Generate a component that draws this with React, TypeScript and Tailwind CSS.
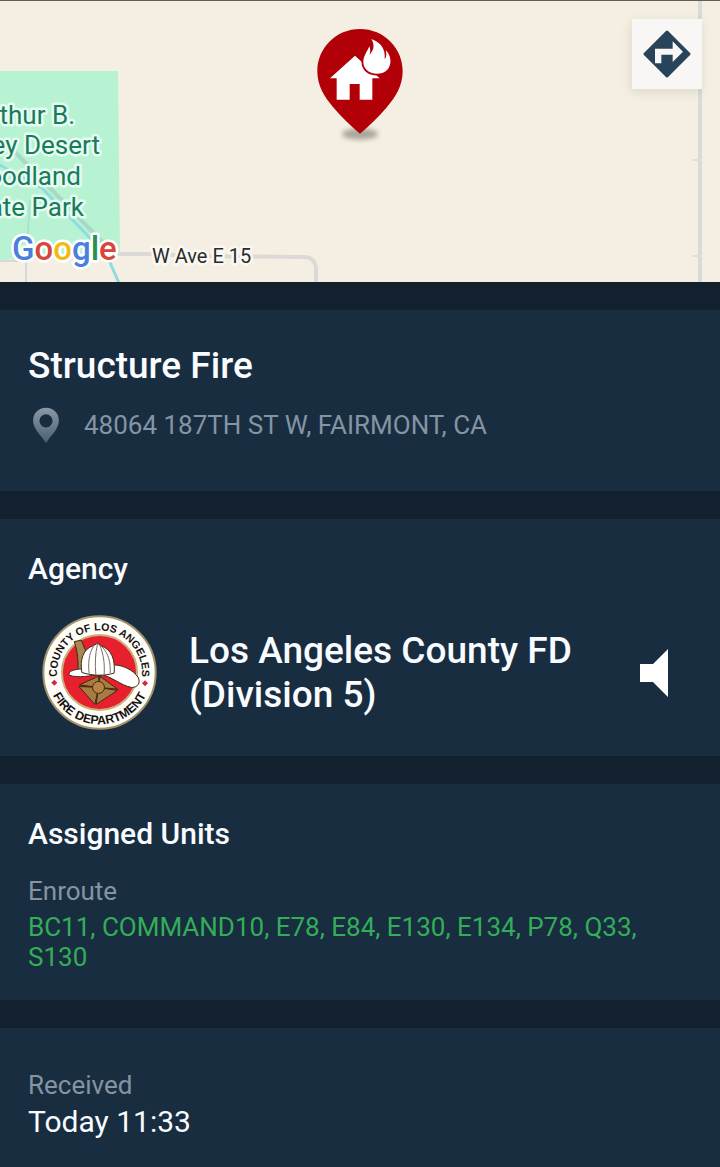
import React from "react";

const Divider: React.FC = () => <div className="h-7 bg-[#12212d]" />;

const Map: React.FC = () => (
  <svg
    viewBox="0 0 720 282"
    preserveAspectRatio="xMidYMid slice"
    className="block h-full w-full"
    fontFamily="Roboto, sans-serif"
    role="img"
    aria-label="Map"
  >
    <rect width="720" height="282" fill="#f5efe3" />
    <path d="M0 71H118L120 256L0 260Z" fill="#b7f3d3" />
    <g fill="none">
      <path d="M0 261H26V282" stroke="#d6d9dc" strokeWidth="2" />
      <path d="M30 200L26 261" stroke="#a9e2ca" strokeWidth="2" />
      <path d="M14 151L112 252" stroke="#a8d9c6" strokeWidth="4" />
      <path d="M-2 164L42 188L88 236L108 258L119 283" stroke="#8fdcdf" strokeWidth="3" />
      <path
        d="M114 254H150L200 256L305 257Q316 258 316 270V282"
        stroke="#dcdad6"
        strokeWidth="4"
      />
      <path d="M700 0V282" stroke="#d9dbd6" strokeWidth="4" />
      <path d="M692 160H700M692 256H700" stroke="#dddfd9" strokeWidth="2" />
    </g>
    <path d="M0 .5H720" stroke="#655a5c" />
    <g
      fontSize="26"
      fill="#187b5c"
      stroke="#e6fbf1"
      strokeWidth="5"
      strokeLinejoin="round"
      paintOrder="stroke"
    >
      <text x="75" y="124" textAnchor="end">
        Arthur B.
      </text>
      <text x="100" y="154" textAnchor="end">
        Ripley Desert
      </text>
      <text x="81" y="185" textAnchor="end">
        Woodland
      </text>
      <text x="84" y="216" textAnchor="end">
        State Park
      </text>
    </g>
    <text
      x="152"
      y="263"
      fontSize="20"
      fill="#2b2b2d"
      stroke="#fbf8f2"
      strokeWidth="5"
      strokeLinejoin="round"
      paintOrder="stroke"
    >
      W Ave E 15
    </text>
    <text
      x="12"
      y="260"
      fontSize="33"
      fontWeight="500"
      stroke="#fff"
      strokeWidth="5"
      strokeLinejoin="round"
      paintOrder="stroke"
    >
      <tspan fill="#4a80dc">G</tspan>
      <tspan fill="#d9453b">o</tspan>
      <tspan fill="#efbb12">o</tspan>
      <tspan fill="#4a80dc">g</tspan>
      <tspan fill="#259152">l</tspan>
      <tspan fill="#d9453b">e</tspan>
    </text>
  </svg>
);

const FirePin: React.FC = () => (
  <svg viewBox="0 0 360 405" className="h-[135px] w-[120px]" aria-hidden="true">
    <defs>
      <filter id="soft" x="-30%" y="-80%" width="160%" height="260%">
        <feGaussianBlur stdDeviation="8" />
      </filter>
    </defs>
    <ellipse cx="180" cy="357" rx="54" ry="17" fill="#8a867e" opacity=".7" filter="url(#soft)" />
    <path
      d="M180 42C108 42 52 99 52 169C52 213 73 246 99 276C124 305 151 333 180 356C209 333 236 305 261 276C287 246 308 213 308 169C308 99 252 42 180 42Z"
      fill="#b10007"
    />
    <path
      d="M165 122L90 190H110V254H149V207H179V254H217V190H239Z"
      fill="#fff"
    />
    <path
      d="M214 72C243 84 257 101 254 132C260 127 260 117 257 106C270 118 274 136 270 149C265 167 250 176 231 176C206 176 190 161 190 141C190 122 203 108 208 94C212 103 211 111 209 119C223 104 224 88 214 72Z"
      fill="#fff"
      stroke="#b10007"
      strokeWidth="11"
      paintOrder="stroke"
    />
  </svg>
);

const Seal: React.FC = () => (
  <svg
    viewBox="35 28 346 346"
    className="size-[115px] shrink-0"
    role="img"
    aria-label="County of Los Angeles Fire Department"
  >
    <defs>
      <path id="arcTop" d="M86 241A128 128 0 1 1 330 241" />
      <path id="arcBottom" d="M52 201A156 156 0 0 0 364 201" />
    </defs>
    <circle cx="208" cy="201" r="169" fill="#fffdf8" stroke="#a3936b" strokeWidth="6" />
    <circle cx="208" cy="201" r="113" fill="#e8202e" stroke="#c9b07c" strokeWidth="6" />
    <g
      fill="#16130f"
      fontFamily="Liberation Sans, sans-serif"
      fontWeight="700"
      textAnchor="middle"
    >
      <text fontSize="32">
        <textPath href="#arcTop" startOffset="50%">
          COUNTY OF LOS ANGELES
        </textPath>
      </text>
      <text fontSize="37">
        <textPath href="#arcBottom" startOffset="50%">
          FIRE DEPARTMENT
        </textPath>
      </text>
    </g>
    <path d="M72 223L81 232L72 241L63 232ZM345 224L354 233L345 242L336 233Z" fill="#c72b48" />
    <g stroke="#3a2a17" strokeWidth="3" strokeLinejoin="round">
      <path d="M132 108L153 104L166 134L156 196L143 202C145 166 142 137 132 108Z" fill="#a88752" />
      <path
        d="M155 190C127 192 112 199 117 209C143 219 181 210 211 207C246 213 270 239 304 246C325 246 332 231 324 215C309 194 282 180 252 178Z"
        fill="#fff"
      />
      <path
        d="M155 201C148 164 159 129 190 120L202 113L213 121C244 131 256 162 252 203C220 212 188 211 155 201Z"
        fill="#fff"
      />
    </g>
    <g fill="none" stroke="#796c5f" strokeWidth="3">
      <path d="M190 122C176 144 173 174 177 204M202 116C195 145 194 175 197 207M209 119C220 145 224 174 222 207M216 124C235 144 242 171 240 203" />
    </g>
    <g stroke="#3f2a12" strokeWidth="3" strokeLinejoin="round">
      <path d="M205 246L148 238L206 212Z" fill="#a67c43" />
      <path d="M205 246L209 212L262 251Z" fill="#a67c43" />
      <path d="M205 246L262 255L198 297Z" fill="#a67c43" />
      <path d="M205 246L194 297L146 243Z" fill="#a67c43" />
      <circle cx="205" cy="246" r="18" fill="#b98246" />
    </g>
    <circle cx="208" cy="213" r="5" fill="#4a3215" />
  </svg>
);

const App: React.FC = () => {
  return (
    <main className="flex min-h-screen flex-col bg-[#182d40] font-[Roboto,sans-serif] text-[#f8fbff]">
      <div className="relative h-[282px] overflow-hidden">
        <Map />
        <div className="absolute inset-x-0 top-[15px] flex justify-center">
          <FirePin />
        </div>
        <a
          href="#directions"
          aria-label="Directions"
          className="absolute top-[19px] right-[18px] flex size-[70px] items-center justify-center bg-[#f8f7f6] shadow-[-1px_3px_10px_rgba(80,70,40,0.14)]"
        >
          <svg viewBox="98 89 144 144" className="size-12" aria-hidden="true">
            <path
              d="M170 95L236 161L170 227L104 161Z"
              fill="#27445a"
              stroke="#27445a"
              strokeWidth="9"
              strokeLinejoin="round"
            />
            <path d="M134 189V145H187V123L218 154L187 185V163H153V189Z" fill="#f8f7f6" />
          </svg>
        </a>
      </div>
      <Divider />
      <section className="flex flex-col gap-4 px-7 pt-8 pb-[47px]">
        <h1 className="text-[37px] leading-12 font-medium">Structure Fire</h1>
        <div className="flex flex-row items-center gap-5">
          <svg viewBox="90 255 100 115" className="h-[38px] w-9" aria-hidden="true">
            <defs>
              <linearGradient id="pinShade" x1="0" y1="0" x2="0" y2="1">
                <stop offset="0" stopColor="#8b98a5" />
                <stop offset="1" stopColor="#4b6073" />
              </linearGradient>
            </defs>
            <path
              fillRule="evenodd"
              fill="url(#pinShade)"
              d="M140 260C117 260 101 277 101 299C101 325 126 345 140 367C154 345 179 325 179 299C179 277 163 260 140 260ZM140 280A20 20 0 1 1 140 320A20 20 0 1 1 140 280Z"
            />
          </svg>
          <p className="text-[26px] leading-[38px] text-[#8594a3]">
            48064 187TH ST W, FAIRMONT, CA
          </p>
        </div>
      </section>
      <Divider />
      <section className="flex flex-col gap-7 px-7 pt-8 pb-[26px]">
        <h2 className="text-[30px] leading-9 font-medium">Agency</h2>
        <div className="flex flex-row items-center gap-8 pr-6 pl-3.5">
          <Seal />
          <div className="flex-1 text-[37px] leading-11 font-medium">
            Los Angeles County FD
            <br />
            (Division 5)
          </div>
          <button type="button" aria-label="Play audio" className="shrink-0">
            <svg viewBox="0 0 28 48" className="h-12 w-7" fill="#fff" aria-hidden="true">
              <path d="M0 15H13L28 0V48L13 33H0Z" />
            </svg>
          </button>
        </div>
      </section>
      <Divider />
      <section className="flex flex-col px-7 pt-8 pb-7">
        <h2 className="text-[30px] leading-9 font-medium">Assigned Units</h2>
        <div className="pt-6 text-[26px] leading-[30px]">
          <h3 className="pb-1.5 text-[#8594a3]">Enroute</h3>
          <p className="text-[#33ad58]">
            BC11, COMMAND10, E78, E84, E130, E134, P78, Q33, S130
          </p>
        </div>
      </section>
      <Divider />
      <section className="flex flex-col px-7 pt-10">
        <h3 className="text-[26px] leading-[34px] text-[#8594a3]">Received</h3>
        <p className="text-[30px] leading-10">Today 11:33</p>
      </section>
    </main>
  );
};

export default App;
